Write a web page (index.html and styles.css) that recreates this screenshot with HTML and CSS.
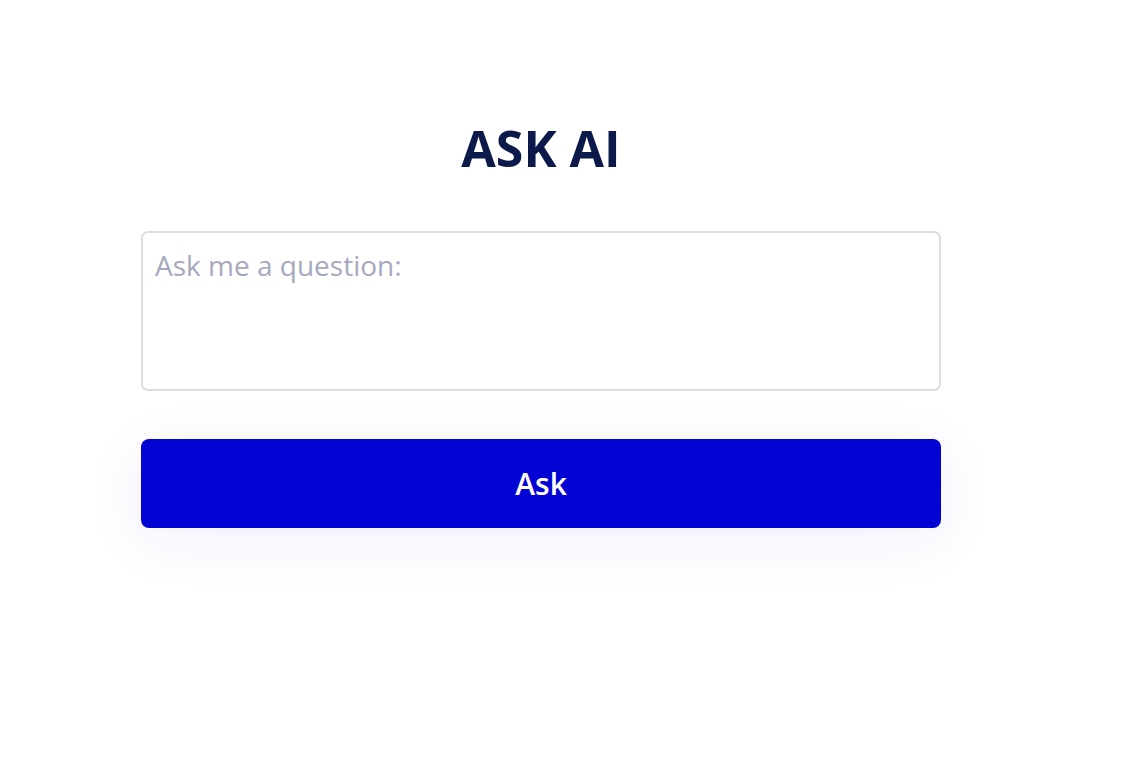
FILE: index.html
```html
<!DOCTYPE html>
<html>
<head>
<meta charset="utf-8">
<link rel="stylesheet" href="styles.css">
</head>
<body>
<main class="page">
  <h1 class="title">ASK AI</h1>
  <textarea class="question" placeholder="Ask me a question:"></textarea>
  <button class="ask">Ask</button>
</main>
</body>
</html>
```
FILE: styles.css
```css
html, body {
  margin: 0;
  padding: 0;
  background: #ffffff;
}
body {
  font-family: "Open Sans", "Liberation Sans", sans-serif;
  min-height: 772px;
}
.page {
  width: 800px;
  margin-left: 141px;
  padding-top: 114px;
  padding-bottom: 120px;
  display: flex;
  flex-direction: column;
}
.title {
  margin: 0;
  font-size: 50px;
  font-weight: 700;
  line-height: 68px;
  color: #0b1a4b;
  text-align: center;
}
.question {
  margin-top: 49px;
  box-sizing: border-box;
  width: 800px;
  height: 160px;
  border: 2px solid #dcdce3;
  border-radius: 7px;
  padding: 13px 12px;
  font-family: "Open Sans", "Liberation Sans", sans-serif;
  font-size: 28px;
  color: #0b1a4b;
  resize: none;
  outline: none;
}
.question::placeholder {
  color: #a6a9be;
}
.ask {
  margin-top: 48px;
  width: 800px;
  height: 89px;
  border: none;
  border-radius: 8px;
  background: #0303d4;
  color: #ffffff;
  font-family: "Open Sans", "Liberation Sans", sans-serif;
  font-size: 30px;
  font-weight: 600;
  box-shadow: 0 12px 60px rgba(40, 40, 200, 0.07);
  cursor: pointer;
}
```
